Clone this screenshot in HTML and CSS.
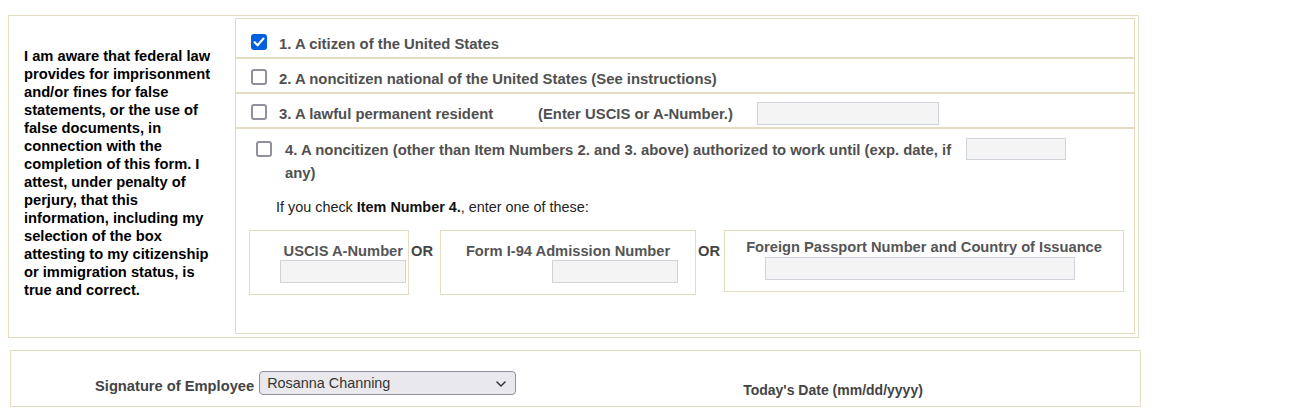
FILE: index.html
```html
<!DOCTYPE html>
<html lang="en">
<head>
<meta charset="utf-8">
<title>Employee Attestation</title>
<link rel="stylesheet" href="styles.css">
</head>
<body>
<div class="page">
  <div class="attest">
    <div class="notice">I am aware that federal law provides for imprisonment and/or fines for false statements, or the use of false documents, in connection with the completion of this form. I attest, under penalty of perjury, that this information, including my selection of the box attesting to my citizenship or immigration status, is true and correct.</div>
    <div class="choices">
      <div class="row row-first">
        <span class="cbwrap"><input type="checkbox" class="cb" checked><svg class="tick" viewBox="0 0 16 16" width="16" height="16"><path d="M3.6 8.3 L6.6 11.3 L12.4 4.6" fill="none" stroke="#fff" stroke-width="2.2" stroke-linecap="round" stroke-linejoin="round"/></svg></span>
        <span class="opt">1. A citizen of the United States</span>
      </div>
      <div class="row">
        <span class="cbwrap"><input type="checkbox" class="cb"></span>
        <span class="opt">2. A noncitizen national of the United States (See instructions)</span>
      </div>
      <div class="row">
        <span class="cbwrap"><input type="checkbox" class="cb"></span>
        <span class="opt opt-lpr">3. A lawful permanent resident</span>
        <span class="opt opt-enter">(Enter USCIS or A-Number.)</span>
        <input type="text" class="field field-lpr">
      </div>
      <div class="row-last">
        <div class="item4">
          <span class="cbwrap cb4"><input type="checkbox" class="cb"></span>
          <span class="opt4">4. A noncitizen (other than Item Numbers 2. and 3. above) authorized to work until (exp. date, if any)</span>
          <input type="text" class="field field-exp">
        </div>
        <p class="hint">If you check <b>Item Number 4.</b>, enter one of these:</p>
        <div class="docs">
          <div class="doc doc-a">
            <span class="doc-label doc-label-a">USCIS A-Number</span>
            <input type="text" class="field field-doc">
          </div>
          <span class="or or-1">OR</span>
          <div class="doc doc-b">
            <span class="doc-label">Form I-94 Admission Number</span>
            <input type="text" class="field field-doc field-b">
          </div>
          <span class="or or-2">OR</span>
          <div class="doc doc-c">
            <span class="doc-label">Foreign Passport Number and Country of Issuance</span>
            <input type="text" class="field field-pass">
          </div>
        </div>
      </div>
    </div>
  </div>
  <div class="sign">
    <span class="sig-label">Signature of Employee</span>
    <span class="selwrap">
      <select class="sel"><option>Rosanna Channing</option></select>
      <svg class="chev" viewBox="0 0 10 6" width="10" height="6"><path d="M1 1 L5 5 L9 1" fill="none" stroke="#333" stroke-width="1.5" stroke-linecap="round" stroke-linejoin="round"/></svg>
    </span>
    <span class="date-label">Today's Date (mm/dd/yyyy)</span>
  </div>
</div>
</body>
</html>
```
FILE: styles.css
```css
body {
  margin: 8px;
  font-family: "Liberation Sans", Arial, sans-serif;
  background: #fff;
}

.page {
  padding-top: 7px;
}

.attest {
  box-sizing: border-box;
  width: 1131px;
  display: flex;
  align-items: flex-start;
  border: 1px solid #e4dbc3;
  padding: 2px 3px 3px 0;
}

.notice {
  box-sizing: border-box;
  flex: 0 0 226px;
  width: 226px;
  padding: 29px 17px 0 15px;
  font-size: 14.7px;
  line-height: 18px;
  font-weight: bold;
  color: #000;
}

.choices {
  box-sizing: border-box;
  flex: 0 0 900px;
  border: 1px solid #e4dbc3;
  display: flex;
  flex-direction: column;
}

.row {
  height: 16px;
  padding: 10px 0 7px 15px;
  display: flex;
  align-items: flex-start;
  border-bottom: 2px solid #e4dbc3;
}

.row-first {
  padding-top: 15px;
}

.cbwrap {
  position: relative;
  display: inline-flex;
  width: 16px;
  height: 16px;
  flex: 0 0 16px;
}

.cb {
  -webkit-appearance: none;
  appearance: none;
  box-sizing: border-box;
  width: 16px;
  height: 16px;
  margin: 0;
  border: 2px solid #8f8f9d;
  border-radius: 3px;
  background: #fff;
}

.cb:checked {
  background: #0060df;
  border-color: #0060df;
}

.tick {
  position: absolute;
  left: 0;
  top: 0;
  pointer-events: none;
}

.opt {
  margin: 1px 0 0 12px;
  font-size: 14.85px;
  line-height: 18px;
  font-weight: bold;
  color: #505050;
  white-space: nowrap;
}

.opt-lpr {
  width: 259px;
}

.opt-enter {
  margin-left: 0;
  width: 219px;
}

.field {
  box-sizing: border-box;
  height: 23px;
  margin: 0;
  padding: 0 4px;
  border: 1px solid #cfd4da;
  border-radius: 0;
  background: #f4f4f4;
}

.field-lpr {
  width: 182px;
  margin-top: -2px;
}

.row-last {
  padding: 10px 0 38px 0;
}

.item4 {
  display: flex;
  align-items: flex-start;
  padding-left: 20px;
}

.cb4 {
  margin-top: 2px;
}

.opt4 {
  flex: 0 0 675px;
  margin-left: 13px;
  font-size: 14.85px;
  line-height: 23px;
  font-weight: bold;
  color: #505050;
}

.field-exp {
  width: 100px;
  height: 22px;
  margin: -1px 0 0 6px;
}

.hint {
  margin: 13px 0 0 40px;
  font-size: 14.4px;
  line-height: 18px;
  color: #222;
}

.hint b {
  color: #111;
}

.docs {
  display: flex;
  align-items: flex-start;
  margin-top: 14px;
  padding-left: 13px;
}

.doc {
  box-sizing: border-box;
  border: 1px solid #e4dbc3;
  display: flex;
  flex-direction: column;
}

.doc-label {
  font-size: 14.7px;
  line-height: 17px;
  font-weight: bold;
  color: #555;
  white-space: nowrap;
}

.doc-a {
  width: 160px;
  padding: 12px 2px 11px 0;
  align-items: flex-end;
}

.doc-label-a {
  padding-right: 3px;
}

.field-doc {
  width: 126px;
}

.doc-b {
  width: 256px;
  padding: 12px 0 11px 0;
  align-items: center;
}

.field-b {
  align-self: flex-end;
  margin-right: 17px;
}

.doc-c {
  width: 400px;
  padding: 8px 0 11px 0;
  align-items: center;
}

.field-pass {
  width: 310px;
  margin-top: 1px;
  align-self: flex-start;
  margin-left: 40px;
}

.or {
  margin-top: 13px;
  font-size: 14.7px;
  line-height: 17px;
  font-weight: bold;
  color: #444;
}

.or-1 {
  margin-left: 2px;
  margin-right: 7px;
}

.or-2 {
  margin-left: 2px;
  margin-right: 4px;
}

.sign {
  box-sizing: border-box;
  width: 1131px;
  margin: 12px 0 0 2px;
  border: 1px solid #e4dbc3;
  padding: 20px 0 11px 84px;
  display: flex;
  align-items: flex-start;
}

.sig-label {
  margin-top: 6px;
  font-size: 14.7px;
  line-height: 18px;
  font-weight: bold;
  color: #444;
}

.selwrap {
  position: relative;
  display: inline-block;
  margin-left: 5px;
  height: 24px;
}

.sel {
  -webkit-appearance: none;
  appearance: none;
  box-sizing: border-box;
  width: 257px;
  height: 24px;
  margin: 0;
  padding: 0 24px 0 7px;
  border: 1px solid #8f8f9d;
  border-radius: 4px;
  background: #e9e9ed;
  font-family: "Liberation Sans", Arial, sans-serif;
  font-size: 14.4px;
  color: #333;
}

.chev {
  position: absolute;
  right: 10px;
  top: 10px;
  pointer-events: none;
}

.date-label {
  margin: 10px 0 -4px 227px;
  font-size: 14px;
  line-height: 18px;
  font-weight: bold;
  color: #444;
}
```
